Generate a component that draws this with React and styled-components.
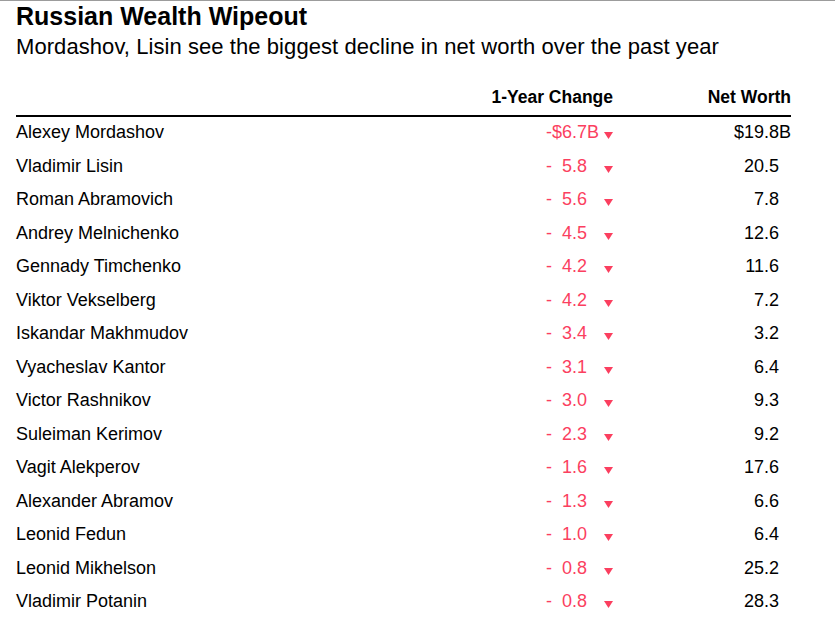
import styled, { createGlobalStyle } from 'styled-components';

const GlobalStyle = createGlobalStyle`
    body {
        margin: 0;
        background: #ffffff;
        font-family: "Liberation Sans", Arial, sans-serif;
        color: #000000;
    }
`;

const Page = styled.div`
    border-top: 1px solid #9c9c9c;
    padding: 1px 44px 0 16px;
`;

const Title = styled.h1`
    margin: 0;
    font-size: 25px;
    line-height: 28px;
    font-weight: 700;
`;

const Subtitle = styled.p`
    margin: 5px 0 0;
    font-size: 22px;
    line-height: 24px;
    letter-spacing: 0.07px;
    white-space: nowrap;
`;

const Table = styled.div`
    margin-top: 28px;
    display: grid;
    grid-template-columns: 1fr 160px 178px;
`;

const HeadCell = styled.div`
    font-size: 17.5px;
    line-height: 20px;
    font-weight: 700;
    text-align: right;
    padding-bottom: 8px;
    border-bottom: 2px solid #000;
`;

const Cell = styled.div`
    font-size: 18px;
    line-height: 31.5px;
    padding-bottom: 2px;
    white-space: nowrap;
    text-align: ${(p) => (p.align === 'right' ? 'right' : 'left')};
`;

const Change = styled(Cell)`
    color: #fb3f5f;
    text-align: right;
`;

const Hidden = styled.span`
    visibility: hidden;
`;

const Arrow = styled.svg`
    width: 9px;
    height: 7px;
    margin-left: 5px;
    vertical-align: -1px;
    fill: #fb3f5f;
`;

const rows = [
    ['Alexey Mordashov', '6.7', '19.8'],
    ['Vladimir Lisin', '5.8', '20.5'],
    ['Roman Abramovich', '5.6', '7.8'],
    ['Andrey Melnichenko', '4.5', '12.6'],
    ['Gennady Timchenko', '4.2', '11.6'],
    ['Viktor Vekselberg', '4.2', '7.2'],
    ['Iskandar Makhmudov', '3.4', '3.2'],
    ['Vyacheslav Kantor', '3.1', '6.4'],
    ['Victor Rashnikov', '3.0', '9.3'],
    ['Suleiman Kerimov', '2.3', '9.2'],
    ['Vagit Alekperov', '1.6', '17.6'],
    ['Alexander Abramov', '1.3', '6.6'],
    ['Leonid Fedun', '1.0', '6.4'],
    ['Leonid Mikhelson', '0.8', '25.2'],
    ['Vladimir Potanin', '0.8', '28.3'],
];

// only the first row shows "$" and "B"; the rest keep the space so numbers line up
function Unit({ show, children }) {
    return show ? <span>{children}</span> : <Hidden>{children}</Hidden>;
}

export default function App() {
    return (
        <>
            <GlobalStyle />
            <Page>
                <Title>Russian Wealth Wipeout</Title>
                <Subtitle>Mordashov, Lisin see the biggest decline in net worth over the past year</Subtitle>
                <Table>
                    <HeadCell />
                    <HeadCell>1-Year Change</HeadCell>
                    <HeadCell>Net Worth</HeadCell>
                    {rows.map(([name, change, worth], i) => (
                        <div key={name} style={{ display: 'contents' }}>
                            <Cell>{name}</Cell>
                            <Change>
                                -<Unit show={i === 0}>$</Unit>
                                {change}
                                <Unit show={i === 0}>B</Unit>
                                <Arrow viewBox="0 0 9 7">
                                    <polygon points="0,0 9,0 4.5,7" />
                                </Arrow>
                            </Change>
                            <Cell align="right">
                                <Unit show={i === 0}>$</Unit>
                                {worth}
                                <Unit show={i === 0}>B</Unit>
                            </Cell>
                        </div>
                    ))}
                </Table>
            </Page>
        </>
    );
}
